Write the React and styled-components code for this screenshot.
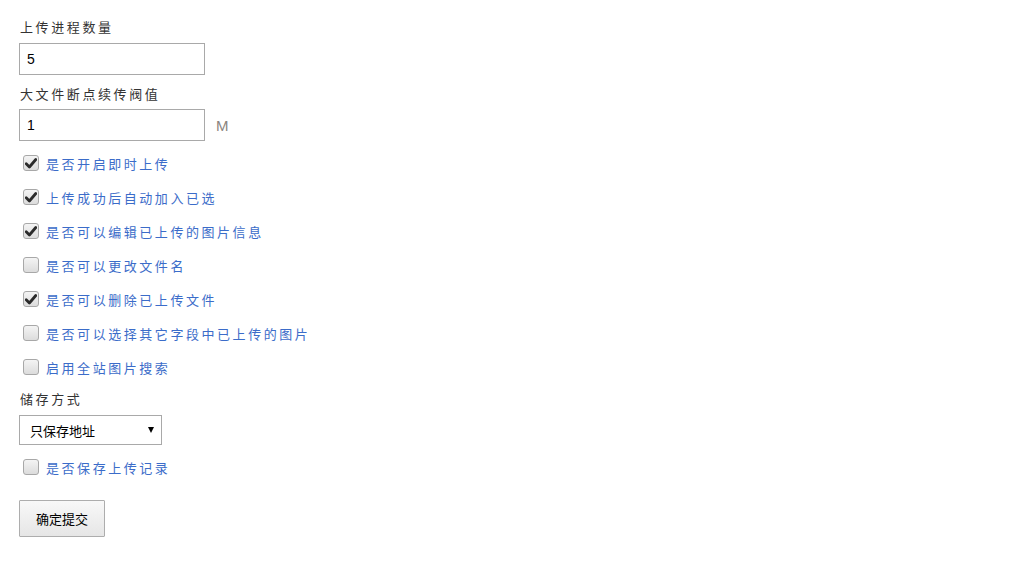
import React, { useState } from "react";
import styled, { createGlobalStyle } from "styled-components";

const Global = createGlobalStyle`
  html, body { margin: 0; padding: 0; background: #fff; }
  body { font-family: "Liberation Sans", Arial, "Noto Sans CJK SC", sans-serif; }
`;

const Form = styled.form`
  display: flex;
  flex-direction: column;
  align-items: flex-start;
  padding: 18px 0 0 19px;
`;

const Label = styled.div`
  font-family: "Liberation Sans", "Noto Sans CJK SC", sans-serif;
  font-size: 13px;
  line-height: 20px;
  letter-spacing: 2.6px;
  color: #333;
  padding-left: 1px;
  margin-top: ${(p) => p.$mt || 0}px;
  margin-bottom: ${(p) => p.$mb || 5}px;
`;

const FieldRow = styled.div`
  display: flex;
  align-items: center;
  gap: 11px;
  margin-bottom: ${(p) => p.$mb || 0}px;
`;

const TextInput = styled.input`
  box-sizing: border-box;
  width: 186px;
  height: 32px;
  border: 1px solid #a9a9a9;
  padding: 0 7px;
  font-family: "Liberation Sans", Arial, sans-serif;
  font-size: 14px;
  color: #000;
  outline: none;
  background: #fff;
`;

const Unit = styled.span`
  font-family: "Liberation Sans", Arial, sans-serif;
  font-size: 15px;
  color: #8a8580;
`;

const CheckRow = styled.label`
  display: flex;
  align-items: center;
  height: 34px;
  padding-left: 4px;
  gap: 7px;
  cursor: pointer;
`;

const Box = styled.span`
  box-sizing: border-box;
  width: 16px;
  height: 16px;
  border: 1px solid #a8a8a8;
  border-radius: 3px;
  background: linear-gradient(#f4f4f4, #dcdcdc);
  display: flex;
  align-items: center;
  justify-content: center;
`;

const CheckText = styled.span`
  font-family: "Liberation Sans", "Noto Sans CJK SC", sans-serif;
  font-size: 13px;
  letter-spacing: 2.55px;
  color: #3b6cc9;
`;

const Select = styled.div`
  box-sizing: border-box;
  width: 143px;
  height: 30px;
  border: 1px solid #a9a9a9;
  display: flex;
  align-items: center;
  justify-content: space-between;
  padding: 0 6px 0 10px;
  margin-bottom: 5px;
  font-family: "Liberation Sans", "Noto Sans CJK SC", sans-serif;
  font-size: 13px;
  color: #000;
  background: #fff;
`;

const Arrow = styled.span`
  width: 0;
  height: 0;
  border-left: 3.5px solid transparent;
  border-right: 3.5px solid transparent;
  border-top: 6px solid #000;
  margin-right: 1px;
`;

const Button = styled.button`
  box-sizing: border-box;
  margin-top: 16px;
  width: 86px;
  height: 37px;
  border: 1px solid #adadad;
  border-radius: 1px;
  background: linear-gradient(#f8f8f8, #e6e6e6);
  font-family: "Liberation Sans", "Noto Sans CJK SC", sans-serif;
  font-size: 13px;
  color: #000;
  padding: 0;
`;

const Check = ({ on }) => (
  <Box>
    {on && (
      <svg width="12" height="11" viewBox="0 0 12 11">
        <path d="M1.2 5.8 L4.4 9 L10.8 1.5" fill="none" stroke="#2b2b2b" strokeWidth="2.8" strokeLinecap="round" strokeLinejoin="round" />
      </svg>
    )}
  </Box>
);

const items = [
  ["是否开启即时上传", true],
  ["上传成功后自动加入已选", true],
  ["是否可以编辑已上传的图片信息", true],
  ["是否可以更改文件名", false],
  ["是否可以删除已上传文件", true],
  ["是否可以选择其它字段中已上传的图片", false],
  ["启用全站图片搜索", false],
];

export default function App() {
  const [checks, setChecks] = useState(items.map((i) => i[1]));
  const [save, setSave] = useState(false);
  return (
    <>
      <Global />
      <Form onSubmit={(e) => e.preventDefault()}>
        <Label $mb={5}>上传进程数量</Label>
        <FieldRow $mb={10}>
          <TextInput defaultValue="5" />
        </FieldRow>
        <Label $mb={4}>大文件断点续传阀值</Label>
        <FieldRow $mb={5}>
          <TextInput defaultValue="1" />
          <Unit>M</Unit>
        </FieldRow>
        {items.map(([t], i) => (
          <CheckRow
            key={t}
            onClick={() => setChecks((c) => c.map((v, j) => (j === i ? !v : v)))}
          >
            <Check on={checks[i]} />
            <CheckText>{t}</CheckText>
          </CheckRow>
        ))}
        <Label $mt={6} $mb={5}>储存方式</Label>
        <Select>
          <span>只保存地址</span>
          <Arrow />
        </Select>
        <CheckRow onClick={() => setSave((s) => !s)}>
          <Check on={save} />
          <CheckText>是否保存上传记录</CheckText>
        </CheckRow>
        <Button type="submit">确定提交</Button>
      </Form>
    </>
  );
}
